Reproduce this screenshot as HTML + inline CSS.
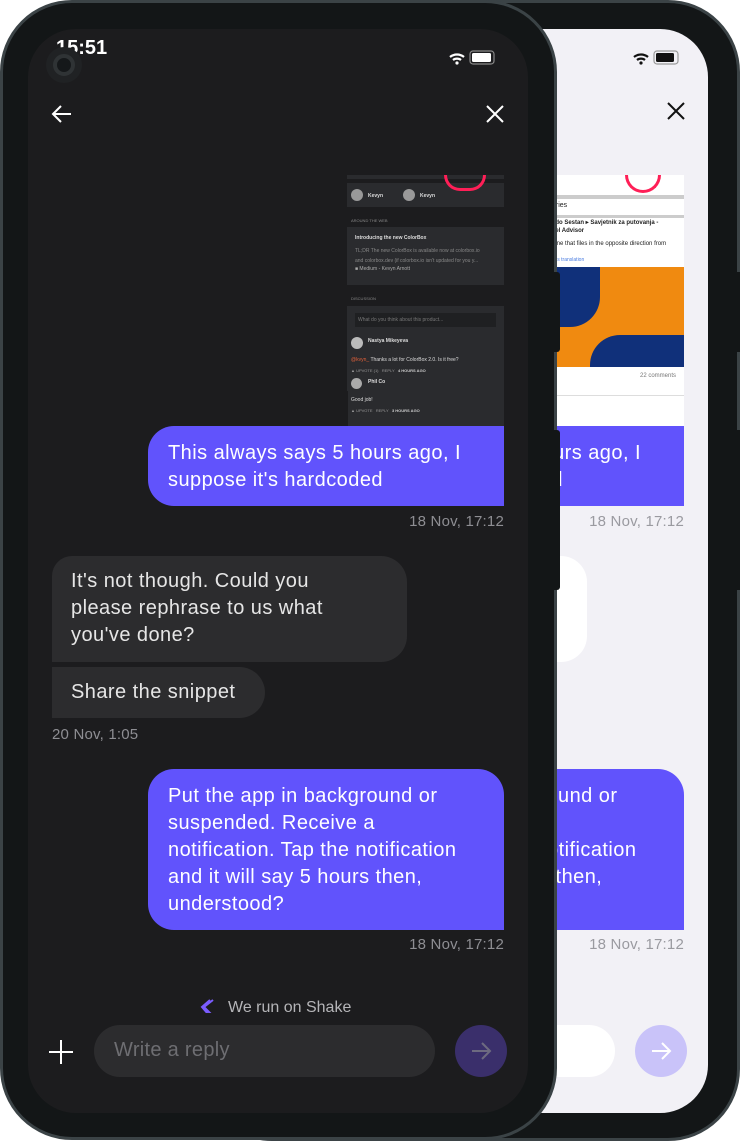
<!DOCTYPE html>
<html><head><meta charset="utf-8"><style>
*{margin:0;padding:0;box-sizing:border-box}
body{width:740px;height:1142px;background:#fff;position:relative;overflow:hidden;font-family:"Liberation Sans",sans-serif}
.abs{position:absolute}
.phone{position:absolute;background:#131617;border:3px solid #3b4346;border-radius:72px}
.txt{font-size:20px;line-height:27px;color:#f2f2f2;letter-spacing:0.45px;white-space:nowrap}
.ts{font-size:15px;color:#8e8e93;text-align:right;letter-spacing:0.2px}
.sent{background:#6153fc;color:#fff}
</style></head><body>
<!-- back phone -->
<div class="phone" style="left:200px;top:0;width:540px;height:1141px"></div>
<div class="abs" style="left:735px;top:272px;width:5px;height:80px;background:#131617"></div>
<div class="abs" style="left:735px;top:430px;width:5px;height:160px;background:#131617"></div>
<div class="abs" style="left:260px;top:29px;width:448px;height:1084px;background:#f2f1f6;border-radius:48px;overflow:hidden">
  <div class="abs" style="left:370px;top:18px"><svg width="52" height="20"><path d="M4 10a11 11 0 0 1 14 0M7 13a6.5 6.5 0 0 1 8 0" stroke="#111" stroke-width="2.2" fill="none"/><circle cx="11" cy="16" r="1.6" fill="#111"/><rect x="24" y="4" width="24" height="13" rx="3" fill="none" stroke="#999" stroke-width="1.2"/><rect x="26" y="6" width="18" height="9" rx="1.5" fill="#111"/></svg></div>
  <div class="abs" style="left:406px;top:72px"><svg width="20" height="20"><path d="M2 2L18 18M18 2L2 18" stroke="#111" stroke-width="2"/></svg></div>
  <div class="abs" style="left:290px;top:146px;width:134px;height:251px;background:#fff;font-size:6px;color:#222">
    <div class="abs" style="left:0;top:20px;width:134px;height:4px;background:#ccc"></div>
    <div class="abs" style="left:2px;top:27px;font-size:7px">ories</div>
    <div class="abs" style="left:0;top:40px;width:134px;height:3px;background:#ccc"></div>
    <div class="abs" style="left:2px;top:44px;font-weight:bold;font-size:6px;line-height:8px">ado Sestan ▸ Savjetnik za putovanja -<br>vel Advisor</div>
    <div class="abs" style="left:2px;top:66px;font-size:6px">lane that files in the opposite direction from</div>
    <div class="abs" style="left:2px;top:82px;font-size:5px;color:#4a7ce0">this translation</div>
    <div class="abs" style="left:0;top:92px;width:134px;height:100px;background:#f08a10"></div>
    <div class="abs" style="left:0;top:92px;width:50px;height:60px;background:#10307a;border-radius:0 0 30px 0"></div>
    <div class="abs" style="left:40px;top:160px;width:94px;height:32px;background:#10307a;border-radius:30px 0 0 0"></div>
    <div class="abs" style="left:90px;top:198px;font-size:6px;color:#777">22 comments</div>
    <div class="abs" style="left:0;top:220px;width:134px;height:25px;border-top:1px solid #ddd"></div>
  </div>
  <div class="abs" style="left:365px;top:146px;width:36px;height:18px;border:3px solid #ff1f57;border-top:none;border-radius:0 0 20px 20px"></div>
  <div class="abs" style="left:-52px;top:0;width:500px;height:1084px">
    <div class="abs sent txt" style="left:120px;top:397px;width:356px;height:80px;border-radius:26px 0 0 26px;padding:14px 20px;color:#fff">This always says 5 hours ago, I<br>suppose it's hardcoded</div>
    <div class="abs ts" style="left:200px;top:484px;width:276px;color:#9a9aa0">18 Nov, 17:12</div>
    <div class="abs" style="left:24px;top:527px;width:355px;height:106px;background:#fff;border-radius:20px 26px 26px 0"></div>
    <div class="abs sent txt" style="left:120px;top:740px;width:356px;height:161px;border-radius:26px 26px 0 26px;padding:14px 20px;color:#fff">Put the app in background or<br>suspended. Receive a<br>notification. Tap the notification<br>and it will say 5 hours then,<br>understood?</div>
    <div class="abs ts" style="left:200px;top:907px;width:276px;color:#9a9aa0">18 Nov, 17:12</div>
    <div class="abs" style="left:66px;top:996px;width:341px;height:52px;background:#fff;border-radius:26px"></div>
    <div class="abs" style="left:427px;top:996px;width:52px;height:52px;background:#c9c3f9;border-radius:50%"></div>
    <div class="abs" style="left:441px;top:1010px"><svg width="24" height="24"><path d="M3 12H21M13 4L21 12L13 20" stroke="#fff" stroke-width="2" fill="none"/></svg></div>
  </div>
</div>

<!-- front phone -->
<div class="phone" style="left:0;top:0;width:557px;height:1140px"></div>
<div class="abs" style="left:553px;top:272px;width:7px;height:80px;background:#131617;border-radius:0 3px 3px 0"></div>
<div class="abs" style="left:553px;top:430px;width:7px;height:160px;background:#131617;border-radius:0 3px 3px 0"></div>
<div class="abs" style="left:28px;top:29px;width:500px;height:1084px;background:#1c1c1e;border-radius:48px;overflow:hidden">
  <div class="abs" style="left:28px;top:8px;font-size:20px;font-weight:bold;color:#fff">15:51</div>
  <div class="abs" style="left:18px;top:18px;width:36px;height:36px;border-radius:50%;background:#202224"></div>
  <div class="abs" style="left:25px;top:25px;width:22px;height:22px;border-radius:50%;border:4px solid #2f3335;background:#15181a"></div>
  <div class="abs" style="left:418px;top:18px"><svg width="52" height="20"><path d="M4 10a11 11 0 0 1 14 0M7 13a6.5 6.5 0 0 1 8 0" stroke="#fff" stroke-width="2.2" fill="none"/><circle cx="11" cy="16" r="1.6" fill="#fff"/><rect x="24" y="4" width="24" height="13" rx="3" fill="none" stroke="#888" stroke-width="1.2"/><rect x="26" y="6" width="19" height="9" rx="1.5" fill="#fff"/></svg></div>
  <div class="abs" style="left:22px;top:73px"><svg width="24" height="24"><path d="M21 12H4M11 4L3 12L11 20" stroke="#fff" stroke-width="2" fill="none"/></svg></div>
  <div class="abs" style="left:457px;top:75px"><svg width="20" height="20"><path d="M2 2L18 18M18 2L2 18" stroke="#fff" stroke-width="2"/></svg></div>
  <!-- thumbnail -->
  <div class="abs" style="left:319px;top:146px;width:157px;height:251px;background:#1c1c1e;font-size:5px;color:#ddd;overflow:hidden">
    <div class="abs" style="left:0;top:0;width:157px;height:4px;background:#2a2b2e"></div>
    <div class="abs" style="left:0;top:8px;width:157px;height:24px;background:#2a2b2e"></div>
    <div class="abs" style="left:4px;top:14px;width:12px;height:12px;border-radius:50%;background:#999"></div>
    <div class="abs" style="left:21px;top:18px;font-weight:bold">Kevyn</div>
    <div class="abs" style="left:56px;top:14px;width:12px;height:12px;border-radius:50%;background:#999"></div>
    <div class="abs" style="left:73px;top:18px;font-weight:bold">Kevyn</div>
    <div class="abs" style="left:4px;top:43px;color:#888;font-size:4px">AROUND THE WEB</div>
    <div class="abs" style="left:0;top:52px;width:157px;height:58px;background:#2a2b2e"></div>
    <div class="abs" style="left:8px;top:60px;font-weight:bold">Introducing the new ColorBox</div>
    <div class="abs" style="left:8px;top:71px;color:#888;line-height:10px">TL;DR The new ColorBox is available now at colorbox.io<br>and colorbox.dev (if colorbox.io isn't updated for you y...</div>
    <div class="abs" style="left:8px;top:91px;color:#aaa">■ Medium - Kevyn Arnott</div>
    <div class="abs" style="left:4px;top:121px;color:#888;font-size:4px">DISCUSSION</div>
    <div class="abs" style="left:0;top:131px;width:157px;height:120px;background:#2a2b2e"></div>
    <div class="abs" style="left:8px;top:138px;width:141px;height:14px;background:#1f2022;color:#777;padding:4px 3px">What do you think about this product...</div>
    <div class="abs" style="left:4px;top:162px;width:12px;height:12px;border-radius:50%;background:#bbb"></div>
    <div class="abs" style="left:21px;top:163px;font-weight:bold">Nastya Mikeyeva</div>
    <div class="abs" style="left:4px;top:182px"><span style="color:#e0603a">@kvyn_</span> Thanks a lot for ColorBox 2.0. Is it free?</div>
    <div class="abs" style="left:4px;top:193px;color:#999;font-size:4px">▲ UPVOTE (1) &nbsp; REPLY &nbsp; <b style="color:#ccc">4 HOURS AGO</b></div>
    <div class="abs" style="left:4px;top:203px;width:11px;height:11px;border-radius:50%;background:#aaa"></div>
    <div class="abs" style="left:21px;top:204px;font-weight:bold">Phil Co</div>
    <div class="abs" style="left:4px;top:222px">Good job!</div>
    <div class="abs" style="left:4px;top:233px;color:#999;font-size:4px">▲ UPVOTE &nbsp; REPLY &nbsp; <b style="color:#ccc">3 HOURS AGO</b></div>
  </div>
  <div class="abs" style="left:416px;top:146px;width:42px;height:16px;border:3px solid #ff1f57;border-top:none;border-radius:0 0 22px 22px"></div>
  <div class="abs" style="left:303px;top:362px;width:17px;height:36px;background:#1c1c1e;border-radius:0 0 0 18px"></div>
  <!-- messages -->
  <div class="abs sent txt" style="left:120px;top:397px;width:356px;height:80px;border-radius:26px 0 0 26px;padding:14px 20px;color:#fff">This always says 5 hours ago, I<br>suppose it's hardcoded</div>
  <div class="abs ts" style="left:200px;top:484px;width:276px">18 Nov, 17:12</div>
  <div class="abs txt" style="left:24px;top:527px;width:355px;height:106px;background:#2c2c2e;border-radius:20px 26px 26px 0;padding:12px 19px;color:#e6e6e6">It's not though. Could you<br>please rephrase to us what<br>you've done?</div>
  <div class="abs txt" style="left:24px;top:638px;width:213px;height:51px;background:#2c2c2e;border-radius:0 26px 26px 0;padding:12px 19px;color:#e6e6e6">Share the snippet</div>
  <div class="abs ts" style="left:24px;top:697px;text-align:left">20 Nov, 1:05</div>
  <div class="abs sent txt" style="left:120px;top:740px;width:356px;height:161px;border-radius:26px 26px 0 26px;padding:14px 20px;color:#fff">Put the app in background or<br>suspended. Receive a<br>notification. Tap the notification<br>and it will say 5 hours then,<br>understood?</div>
  <div class="abs ts" style="left:200px;top:907px;width:276px">18 Nov, 17:12</div>
  <div class="abs" style="left:0;top:968px;width:500px;height:16px;overflow:hidden">
    <div class="abs" style="left:172px;top:2px"><svg width="16" height="16"><path d="M13 1L4 8L11 15M10 1L2 8L8 15" stroke="#7a5cff" stroke-width="2" fill="none"/></svg></div>
    <div class="abs" style="left:200px;top:2px;font-size:16px;color:#b5b5b8">We run on Shake</div>
  </div>
  <div class="abs" style="left:20px;top:1010px"><svg width="26" height="26"><path d="M13 1V25M1 13H25" stroke="#fff" stroke-width="2"/></svg></div>
  <div class="abs" style="left:66px;top:996px;width:341px;height:52px;background:#2c2c2e;border-radius:26px;padding:14px 20px;font-size:20px;color:#6e6e72;letter-spacing:0.3px">Write a reply</div>
  <div class="abs" style="left:427px;top:996px;width:52px;height:52px;background:#3a2f6b;border-radius:50%"></div>
  <div class="abs" style="left:441px;top:1010px"><svg width="24" height="24"><path d="M3 12H21M13 4L21 12L13 20" stroke="#6d6a80" stroke-width="2" fill="none"/></svg></div>
</div>
</body></html>
